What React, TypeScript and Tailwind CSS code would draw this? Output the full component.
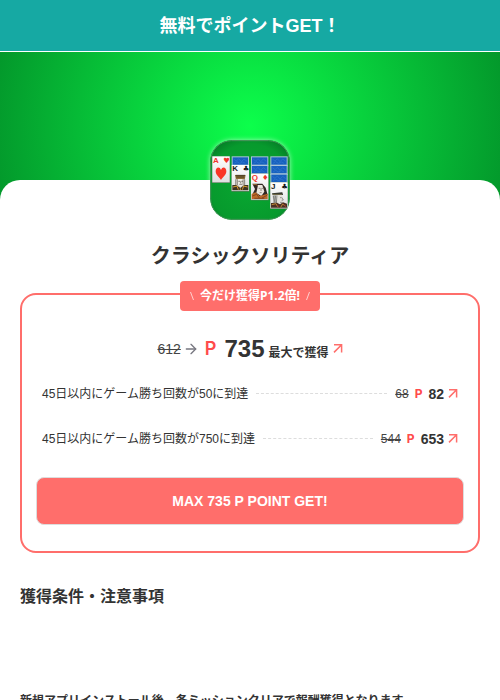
import { ArrowRight } from "lucide-react";

interface Mission {
  label: string;
  before: number;
  after: number;
}

const missions: Mission[] = [
  { label: "45日以内にゲーム勝ち回数が50に到達", before: 68, after: 82 },
  { label: "45日以内にゲーム勝ち回数が750に到達", before: 544, after: 653 },
];

const columns = [
  { x: 7, backs: 0, rank: "A", suit: "♥", color: "#f0352b" },
  { x: 65, backs: 1, rank: "K", suit: "♣", color: "#15181a" },
  { x: 123, backs: 2, rank: "Q", suit: "♦", color: "#f0352b" },
  { x: 181, backs: 3, rank: "J", suit: "♣", color: "#15181a" },
];

function UpArrow() {
  return (
    <svg viewBox="0 0 10 10" className="h-[10px] w-[10px] shrink-0" fill="none" stroke="#ff6e6b" strokeWidth="1.5" aria-hidden="true">
      <path d="M1 .8h7.6v7.6M8.6.8 1 8.4" />
    </svg>
  );
}

function Face({ rank }: { rank: string }) {
  if (rank === "A") {
    return (
      <path d="M26 71C20 61 10 56 10 45c0-13 12-16 16-4 4-12 16-9 16 4 0 11-10 16-16 26Z" fill="#fa3426" />
    );
  }
  if (rank === "K") {
    return (
      <>
        <path d="M10 30h32l-3 14H13Z" fill="#8a6d35" />
        <path d="M12 31h28M14 36h24" stroke="#2b261c" strokeWidth="2" />
        <path d="M12 43h28v18l-7 8H19l-7-8Z" fill="#d5d2cb" />
        <path d="M18 42h17v16l-8 8-9-8Z" fill="#eeebe4" />
        <path d="M12 43v20M17 43v17M39 43v20M34 43v17" stroke="#65615a" strokeWidth="2" />
        <path d="M20 49h5M29 49h5M23 58h8M27 49v6" stroke="#504b44" strokeWidth="2" />
        <path d="M2 60l12 0 12 9 12-9 12 0v16H2Z" fill="#3c3222" />
        <path d="M4 66l12-3 4 11M48 66l-12-3-4 11M26 70v5" stroke="#d79a31" strokeWidth="3" fill="none" />
      </>
    );
  }
  if (rank === "Q") {
    return (
      <>
        <path d="M4 30h30l10 12 6 22-20 8-27-7 9-19Z" fill="#322823" />
        <path d="M21 34h13l6 20-9 13-15-9Z" fill="#ece7df" />
        <path d="M23 44h5M32 44h4M26 57h6M30 44v8" stroke="#635a52" strokeWidth="2" />
        <path d="M2 61l12-5 12 11 24-7v16H2Z" fill="#bd6a29" />
        <path d="M4 67l13-5 8 11M48 65l-15 8M10 74h30" stroke="#68351e" strokeWidth="2" fill="none" />
        <path d="M6 33l10-1 4 5" stroke="#c98b3d" strokeWidth="2" fill="none" />
      </>
    );
  }
  return (
    <>
      <path d="M5 33l31-3 2 8H7Z" fill="#2c3029" />
      <path d="M6 36h29" stroke="#a59660" strokeWidth="2" />
      <path d="M7 39h17l-4 24H9Z" fill="#a9aaa5" />
      <path d="M22 38h13l4 14-5 13H20Z" fill="#e4e2dc" />
      <path d="M9 41l5 20M15 40l4 21M34 45l5 8-5 1M29 46h4M29 60h7" stroke="#696b66" strokeWidth="2" fill="none" />
      <path d="M2 62l18-1 9 5 9-6 12 4v12H2Z" fill="#4b3023" />
      <path d="M4 67l13-3 5 9M31 75l6-10 9 7" stroke="#c08a37" strokeWidth="3" fill="none" />
      <path d="M21 67l6 8M40 66l7 7" stroke="#8e2b2c" strokeWidth="3" />
    </>
  );
}

function GameIcon() {
  return (
    <svg viewBox="0 0 240 240" className="h-20 w-20 rounded-[22px] shadow-[0_0_5px_rgba(255,255,255,0.6)]" role="img" aria-label="クラシックソリティア">
      <defs>
        <radialGradient id="felt" cx="50%" cy="55%" r="72%">
          <stop offset="0" stopColor="#08a831" />
          <stop offset="0.7" stopColor="#079a2d" />
          <stop offset="1" stopColor="#046b23" />
        </radialGradient>
        <linearGradient id="card" x1="0" y1="0" x2="0" y2="1">
          <stop offset="0" stopColor="#ffffff" />
          <stop offset="1" stopColor="#dedfe0" />
        </linearGradient>
      </defs>
      <rect width="240" height="240" rx="64" fill="url(#felt)" />
      <rect x="2" y="2" width="236" height="236" rx="62" fill="none" stroke="#4f9560" strokeWidth="3" />
      {columns.map((c) => (
        <g key={c.rank} transform={`translate(${c.x} 49)`}>
          {Array.from({ length: c.backs }, (_, i) => (
            <g key={i} transform={`translate(0 ${i * 26})`}>
              <rect width="52" height="30" fill="#a9c4d8" />
              <rect x="3" y="3" width="46" height="22" fill="#1761bf" />
              <path d="M6 8l8 6 7-7 8 9 8-8 9 7M8 21l8-5 8 5 9-4 8 4" stroke="#3279cf" strokeWidth="2" fill="none" />
            </g>
          ))}
          <g transform={`translate(0 ${c.backs * 26})`}>
            <rect x="-1" y="0" width="54" height="80" fill="#5b7d5c" />
            <rect width="52" height="78" fill="url(#card)" />
            <text x="2" y="19" fontSize="24" fontWeight="700" fontFamily="Liberation Sans, sans-serif" fill={c.color}>
              {c.rank}
            </text>
            <text x="33" y="19" fontSize="22" fontFamily="DejaVu Sans, sans-serif" fill={c.color}>
              {c.suit}
            </text>
            <Face rank={c.rank} />
          </g>
        </g>
      ))}
    </svg>
  );
}

export default function App() {
  return (
    <div className="bg-white font-['Liberation_Sans','Noto_Sans_CJK_JP',sans-serif] text-[#333]" lang="ja">
      <header className="flex h-[52px] items-center justify-center border-b border-white bg-[#16a9a3]">
        <h1 className="text-lg font-bold text-white">無料でポイントGET！</h1>
      </header>

      <div className="h-[148px] bg-[radial-gradient(circle,#0cff4b,#03982b)]" />

      <main className="relative -mt-5 rounded-t-[20px] bg-white px-5">
        <div className="flex justify-center">
          <div className="-mt-10">
            <GameIcon />
          </div>
        </div>
        <h2 className="mt-5 text-center text-xl leading-8 font-bold">クラシックソリティア</h2>

        <section className="relative mt-[21px] rounded-2xl border-2 border-[#ff6e6b] pt-[38px] pb-[26px]">
          <p className="absolute -top-[14px] left-1/2 flex h-[30px] w-[140px] -translate-x-1/2 items-center justify-center gap-[6px] rounded bg-[#ff6e6b] font-['Noto_Sans','Noto_Sans_CJK_JP',sans-serif] text-xs font-bold whitespace-nowrap text-white">
            <svg viewBox="0 0 4 8" className="h-2 w-1" stroke="#ffd0cf" aria-hidden="true">
              <path d="M.5 0l3 8" />
            </svg>
            今だけ獲得P1.2倍!
            <svg viewBox="0 0 4 8" className="h-2 w-1" stroke="#ffd0cf" aria-hidden="true">
              <path d="M3.5 0l-3 8" />
            </svg>
          </p>

          <div className="flex h-8 items-center justify-center">
            <s className="text-sm text-[#444]">612</s>
            <ArrowRight className="mx-[2px] h-4 w-4 text-[#777780]" strokeWidth={2} />
            <span className="ml-1 font-['Inter',sans-serif] text-lg font-semibold text-[#ff4b4b]">P</span>
            <p className="ml-2 flex items-baseline gap-1 font-bold">
              <span className="text-2xl">735</span>
              <span className="text-xs">最大で獲得</span>
            </p>
            <span className="ml-1">
              <UpArrow />
            </span>
          </div>

          <ul className="mt-[6px] px-5">
            {missions.map((m) => (
              <li key={m.label} className="flex h-[45px] items-center text-xs">
                <span>{m.label}</span>
                <span className="mx-2 flex-1 border-t border-dashed border-[#ddd]" />
                <s className="text-[#444]">{m.before}</s>
                <span className="ml-[6px] font-['Inter',sans-serif] text-xs font-bold text-[#ff4b4b]">P</span>
                <b className="ml-[6px] text-sm">{m.after}</b>
                <span className="ml-1">
                  <UpArrow />
                </span>
              </li>
            ))}
          </ul>

          <div className="mt-4 px-[14px]">
            <button type="button" className="h-12 w-full rounded-lg border border-[#ddd] bg-[#ff6e6b] text-sm font-bold text-white">
              MAX 735 P POINT GET!
            </button>
          </div>
        </section>

        <h3 className="mt-8 text-base leading-6 font-bold">獲得条件・注意事項</h3>
        <p className="mt-[82px] text-xs leading-5 font-bold">
          新規アプリインストール後、各ミッションクリアで報酬獲得となります。
        </p>
      </main>
    </div>
  );
}
